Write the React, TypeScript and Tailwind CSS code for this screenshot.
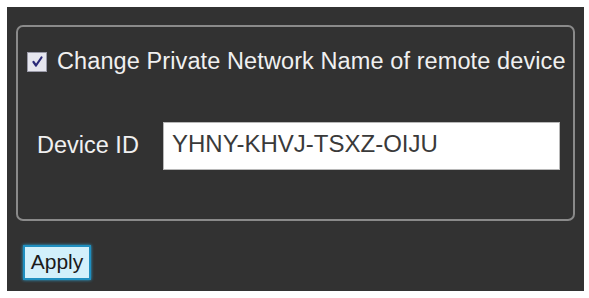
import { useState } from 'react'

export default function App() {
  const [checked, setChecked] = useState(true)
  const [deviceId, setDeviceId] = useState('YHNY-KHVJ-TSXZ-OIJU')

  return (
    <div className="w-[589px] h-[298px] bg-white pt-[7px] pl-[7px] font-['Liberation_Sans',Arial,sans-serif]">
      <div className="w-[577px] h-[284px] bg-[#323232] flex flex-col px-[9px] pt-[18px]">
        {/* Fieldset */}
        <div className="h-[196px] rounded-[7px] border-2 border-[#8a8a8a] pl-[9px] pt-[23px]">
          <label className="flex items-center gap-[10px] cursor-pointer">
            <span
              onClick={() => setChecked(!checked)}
              className="w-[20px] h-[20px] bg-[#e6e6ee] border border-[#9a9aa8] flex items-center justify-center"
            >
              {checked && (
                <svg width="13" height="13" viewBox="0 0 13 13">
                  <path d="M2.5 7 L5 10.5 L10.5 2.5" fill="none" stroke="#2b2a78" strokeWidth="2.2" strokeLinecap="round" strokeLinejoin="round" />
                </svg>
              )}
            </span>
            <span className="text-[23.5px] leading-none text-[#f0f0f0] tracking-[0.1px]">
              Change Private Network Name of remote device
            </span>
          </label>

          <div className="flex items-center mt-[48px]">
            <span className="w-[136px] pl-[10px] text-[23.5px] leading-none text-[#f0f0f0]">Device ID</span>
            <input
              value={deviceId}
              onChange={(e) => setDeviceId(e.target.value)}
              className="w-[397px] h-[48px] bg-white border border-[#b8b8b8] px-[8px] pb-[4px] text-[24px] text-[#3a3a3a] outline-none"
            />
          </div>
        </div>

        <div className="pt-[24px] pl-[7px]">
          <button className="w-[68px] h-[35px] bg-[#d2f0fb] border-2 border-[#1f8fc0] shadow-[0_0_3px_#2aa7d8] text-[21px] leading-none text-[#1b1b1b] flex items-center justify-center pb-[2px]">
            Apply
          </button>
        </div>
      </div>
    </div>
  )
}
